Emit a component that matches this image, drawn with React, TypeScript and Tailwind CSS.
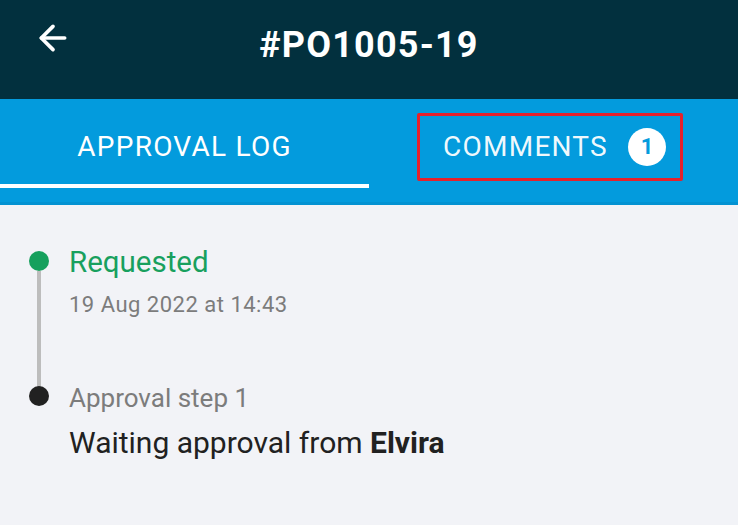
import { ArrowLeft } from 'lucide-react'

export default function App() {
  return (
    <div className="w-[738px] h-[525px] overflow-hidden bg-[#f2f3f7] font-['Roboto',sans-serif]">
      {/* Toolbar */}
      <header className="relative h-[99px] bg-[#02303e] flex items-start justify-center">
        <button className="absolute left-[33px] top-[18px] p-0 text-white" aria-label="Back">
          <ArrowLeft className="w-[40px] h-[40px]" strokeWidth={2.2} />
        </button>
        <h1 className="mt-[22px] text-[36px] font-bold text-white tracking-[1.2px] leading-[46px]">#PO1005-19</h1>
      </header>

      {/* Tabs */}
      <nav className="h-[106px] bg-[#039bdd] flex border-b-[3px] border-[#0392d2]">
        <div className="w-[369px] flex flex-col">
          <div className="flex-1 flex items-center justify-center pt-[10px]">
            <span className="text-[28px] text-white leading-none tracking-[1.25px]">APPROVAL LOG</span>
          </div>
          <div className="h-[4px] bg-white mb-[14px]" />
        </div>
        <div className="flex-1 flex items-start pt-[14px] pl-[48px]">
          <div className="w-[266px] h-[68px] border-[3px] border-[#e5212b] rounded-[2px] flex items-center pl-[23px] gap-[20px]">
            <span className="text-[28px] text-white/95 leading-none tracking-[1.25px]">COMMENTS</span>
            <span className="w-[38px] h-[38px] rounded-full bg-white flex items-center justify-center text-[22px] font-bold text-[#039bdd] leading-none">1</span>
          </div>
        </div>
      </nav>

      {/* Timeline */}
      <div className="pt-[41px] pl-[29px]">
        <div className="flex">
          <div className="w-[20px] flex flex-col items-center">
            <div className="w-[20px] h-[20px] rounded-full bg-[#16a05d] mt-[5px]" />
            <div className="w-[4px] h-[120px] bg-[#bdbdbd]" />
          </div>
          <div className="ml-[20px]">
            <div className="text-[29.5px] leading-[32px] text-[#18a05e]">Requested</div>
            <div className="mt-[14px] text-[22px] text-[#7c7c7c] leading-[26px] tracking-[0.5px]">19 Aug 2022 at 14:43</div>
          </div>
        </div>
        <div className="flex">
          <div className="w-[20px] flex flex-col items-center">
            <div className="w-[20px] h-[20px] rounded-full bg-[#212121] -mt-[5px]" />
          </div>
          <div className="ml-[20px] -mt-[8px]">
            <div className="text-[26px] leading-[30px] text-[#7c7c7c]">Approval step 1</div>
            <div className="mt-[13px] text-[30px] leading-[34px] text-[#212121]">
              Waiting approval from <span className="font-bold">Elvira</span>
            </div>
          </div>
        </div>
      </div>
    </div>
  )
}
